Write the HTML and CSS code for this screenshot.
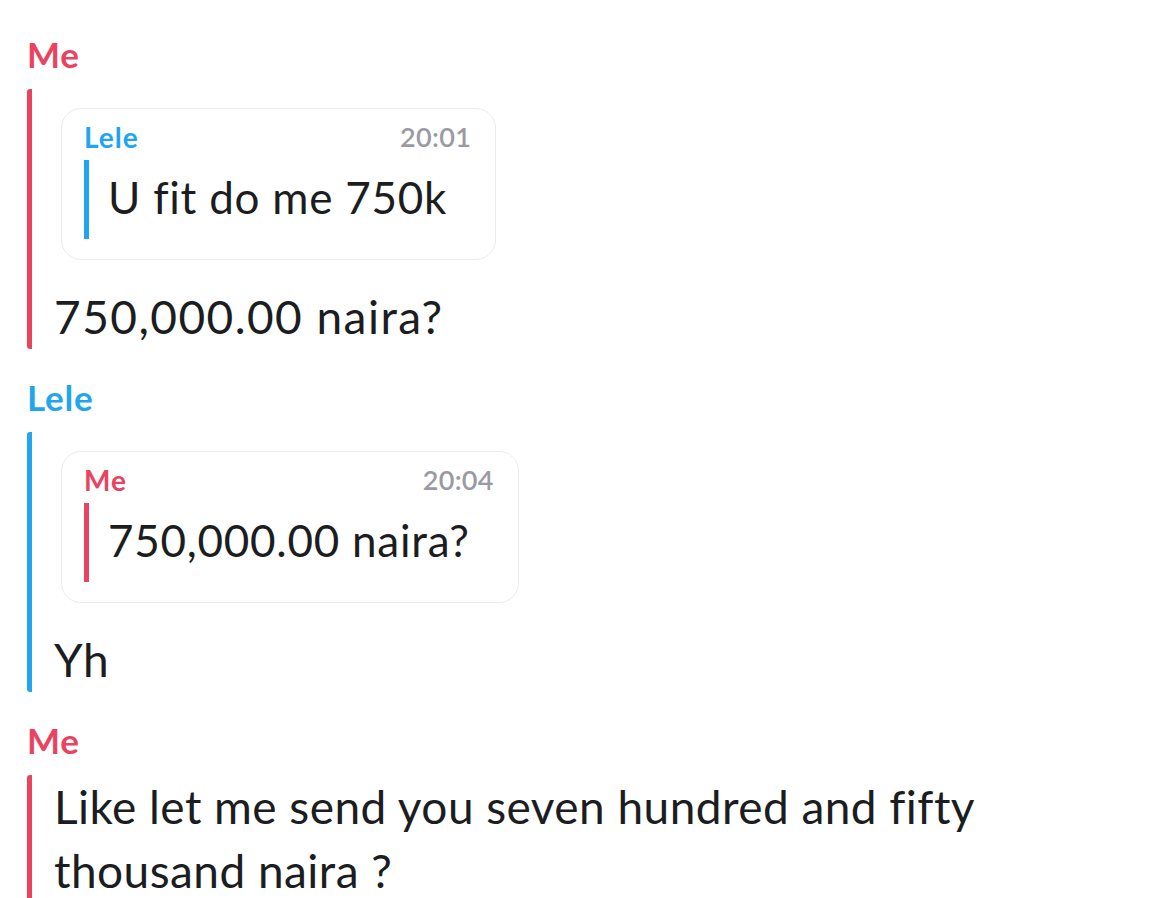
FILE: index.html
```html
<!DOCTYPE html>
<html lang="en">
<head>
    <meta charset="UTF-8">
    <meta name="viewport" content="width=device-width, initial-scale=1.0">
    <title>Chat</title>
    <link rel="stylesheet" href="styles.css">
</head>
<body>
    <div class="chat">
        <div class="group me">
            <div class="sender">Me</div>
            <div class="thread">
                <div class="reply-card">
                    <div class="reply-head">
                        <span class="reply-name lele">Lele</span>
                        <span class="reply-time">20:01</span>
                    </div>
                    <div class="reply-quote lele">U fit do me 750k</div>
                </div>
                <div class="message figures">750,000.00 naira?</div>
            </div>
        </div>

        <div class="group lele">
            <div class="sender">Lele</div>
            <div class="thread">
                <div class="reply-card">
                    <div class="reply-head">
                        <span class="reply-name me">Me</span>
                        <span class="reply-time">20:04</span>
                    </div>
                    <div class="reply-quote me">750,000.00 naira?</div>
                </div>
                <div class="message">Yh</div>
            </div>
        </div>

        <div class="group me">
            <div class="sender">Me</div>
            <div class="thread">
                <div class="message wrap">Like let me send you seven hundred and fifty thousand naira ?</div>
            </div>
        </div>
    </div>
</body>
</html>
```

FILE: styles.css
```css
body {
    margin: 0;
    padding: 0;
    background: #fff;
    font-family: Lato, "Open Sans", sans-serif;
    font-variant-ligatures: none;
    color: #1b1d21;
    overflow: hidden;
}

.chat {
    padding: 34px 0 0 27px;
}

.group {
    margin-bottom: 28px;
}

.sender {
    font-size: 35px;
    font-weight: 700;
    line-height: 40px;
    letter-spacing: 0.8px;
    margin-bottom: 15px;
}

.me .sender,
.reply-name.me {
    color: #e9435f;
}

.lele .sender,
.reply-name.lele {
    color: #1fa6ef;
}

.thread {
    border-left: 5px solid;
    border-radius: 3px;
    padding-left: 22px;
}

.me .thread {
    border-color: #e9435f;
}

.lele .thread {
    border-color: #1fa6ef;
}

.reply-card {
    display: inline-flex;
    flex-direction: column;
    margin: 19px 0 25px 7px;
    padding: 12px 24px 20px 22px;
    border: 1px solid #ececef;
    border-radius: 20px;
    background: #fff;
}

.reply-head {
    display: flex;
    justify-content: space-between;
    line-height: 32px;
    font-size: 27px;
    margin-bottom: 7px;
}

.reply-name {
    font-size: 28px;
    font-weight: 700;
    letter-spacing: 1px;
}

.reply-time {
    color: #9a9aa3;
    font-weight: 600;
    letter-spacing: 0.3px;
}

.reply-quote {
    font-size: 44px;
    line-height: 64px;
    letter-spacing: 0.75px;
    padding: 5px 24px 10px 19px;
    border-left: 5px solid;
}

.reply-quote.lele {
    border-color: #1fa6ef;
}

.reply-quote.me {
    border-color: #e9435f;
}

.message {
    font-size: 46px;
    line-height: 64px;
    letter-spacing: 0.45px;
}

.message.figures {
    letter-spacing: 1.45px;
}

.message.wrap {
    max-width: 960px;
}
```
